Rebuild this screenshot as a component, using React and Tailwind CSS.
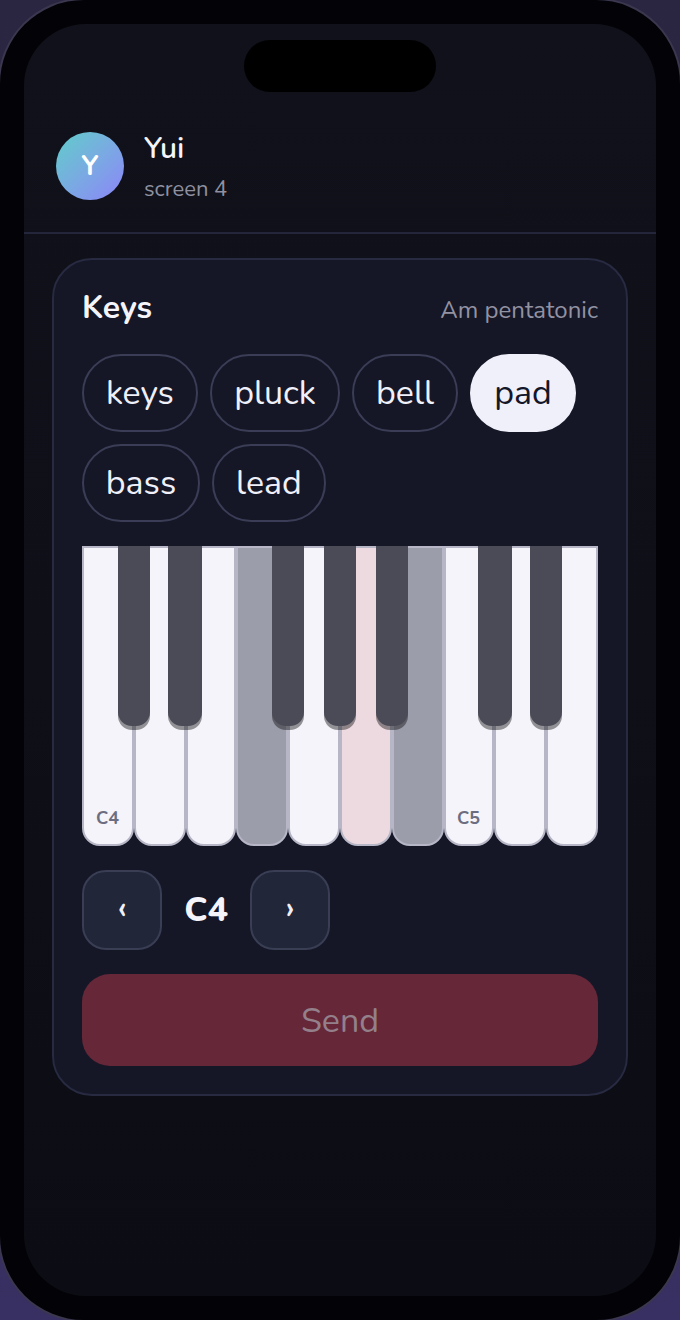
const FONT = "font-['Nunito','Lato','Noto_Sans',sans-serif]";

const PRESETS = [
  { name: "keys", w: "w-[116px]" },
  { name: "pluck", w: "w-[130px]" },
  { name: "bell", w: "w-[106px]" },
  { name: "pad", w: "w-[106px]", active: true },
  { name: "bass", w: "w-[118px]" },
  { name: "lead", w: "w-[114px]" },
];

const WHITE_KEYS = [
  { w: "w-[52px]", label: "C4", labelLeft: "left-[12px]" },
  { w: "w-[52px]" },
  { w: "w-[50px]" },
  { w: "w-[52px]", tone: "dim" },
  { w: "w-[52px]" },
  { w: "w-[52px]", tone: "pink" },
  { w: "w-[52px]", tone: "dim" },
  { w: "w-[50px]", label: "C5", labelLeft: "left-[11px]" },
  { w: "w-[52px]" },
  { w: "w-[52px]" },
];

// boundaries between white keys that carry a black key
const BLACK_KEYS = [
  "left-[36px] w-[32px]",
  "left-[86px] w-[34px]",
  "left-[190px] w-[32px]",
  "left-[242px] w-[32px]",
  "left-[294px] w-[32px]",
  "left-[396px] w-[34px]",
  "left-[448px] w-[32px]",
];

function Pill({ name, w, active }) {
  return (
    <button
      className={`h-[78px] ${w} rounded-full border-2 text-[34px] ${
        active ? "bg-[#f0f0fa] border-[#f0f0fa] text-[#14172a]" : "border-[#3a3d55] text-[#f0f0fa]"
      }`}
    >
      {name}
    </button>
  );
}

function WhiteKey({ w, label, labelLeft, tone }) {
  const bg = tone === "dim" ? "bg-[#9c9dab]" : tone === "pink" ? "bg-[#eddae0]" : "bg-[#f4f4fa]";
  return (
    <div className={`relative ${w} rounded-b-[18px] border-2 border-[#b6b6c6] ${bg}`}>
      {label && (
        <span className={`absolute bottom-[17px] ${labelLeft} text-[18px] font-bold leading-none text-[#6c6d80]`}>
          {label}
        </span>
      )}
    </div>
  );
}

function OctaveButton({ children }) {
  return (
    <button className="flex h-[80px] w-[80px] items-center justify-center rounded-[24px] border-2 border-[#393e55] bg-[#212638] pb-1 text-[34px] font-semibold text-[#f0f0fa]">
      {children}
    </button>
  );
}

export default function App() {
  return (
    <div className={`h-[1320px] w-[680px] overflow-hidden bg-gradient-to-b from-[#2a2540] to-[#383062] ${FONT}`}>
      <div className="relative h-full w-full rounded-[84px] bg-[#030307] p-[24px] shadow-[0_0_0_2px_#3a374f]">
        <div className="absolute left-[244px] top-[40px] h-[52px] w-[192px] rounded-full bg-black" />
        <div className="h-full w-full rounded-[62px] bg-gradient-to-b from-[#10111a] to-[#0c0d14]">
          <div className="flex h-[210px] items-start gap-[20px] border-b-2 border-[#23253a] px-[32px] pt-[108px]">
            <div className="flex h-[68px] w-[68px] items-center justify-center rounded-full bg-gradient-to-br from-[#5ccdc8] to-[#8b83f8] text-[28px] font-bold text-white">
              Y
            </div>
            <div className="-mt-[2px]">
              <div className="text-[30px] font-semibold leading-[38px] text-[#f4f4fa]">Yui</div>
              <div className="mt-[6px] text-[22px] leading-[30px] text-[#8f90a0]">screen 4</div>
            </div>
          </div>

          <div className="mx-[28px] mt-[24px] rounded-[40px] border-2 border-[#272a40] bg-[#151727] p-[28px]">
            <div className="flex h-[40px] items-center justify-between">
              <span className="text-[32px] font-bold text-[#f4f4fa]">Keys</span>
              <span className="pt-[4px] text-[24px] text-[#9292a2]">Am pentatonic</span>
            </div>

            <div className="mt-[26px] flex flex-wrap gap-[12px]">
              {PRESETS.map((p) => (
                <Pill key={p.name} {...p} />
              ))}
            </div>

            <div className="relative mt-[24px] flex h-[300px] w-[516px]">
              {WHITE_KEYS.map((k, i) => (
                <WhiteKey key={i} {...k} />
              ))}
              {BLACK_KEYS.map((c) => (
                <div
                  key={c}
                  className={`absolute top-0 h-[180px] rounded-b-[14px] bg-[#4a4b57] shadow-[0_4px_0_rgba(0,0,0,0.4)] ${c}`}
                />
              ))}
            </div>

            <div className="mt-[24px] flex items-center">
              <OctaveButton>‹</OctaveButton>
              <span className="w-[88px] text-center text-[34px] font-extrabold text-[#f4f4fa]">C4</span>
              <OctaveButton>›</OctaveButton>
            </div>

            <button className="mt-[24px] h-[92px] w-full rounded-[28px] bg-[#662738] pt-[2px] text-[34px] text-[#93808a]">
              Send
            </button>
          </div>
        </div>
      </div>
    </div>
  );
}
